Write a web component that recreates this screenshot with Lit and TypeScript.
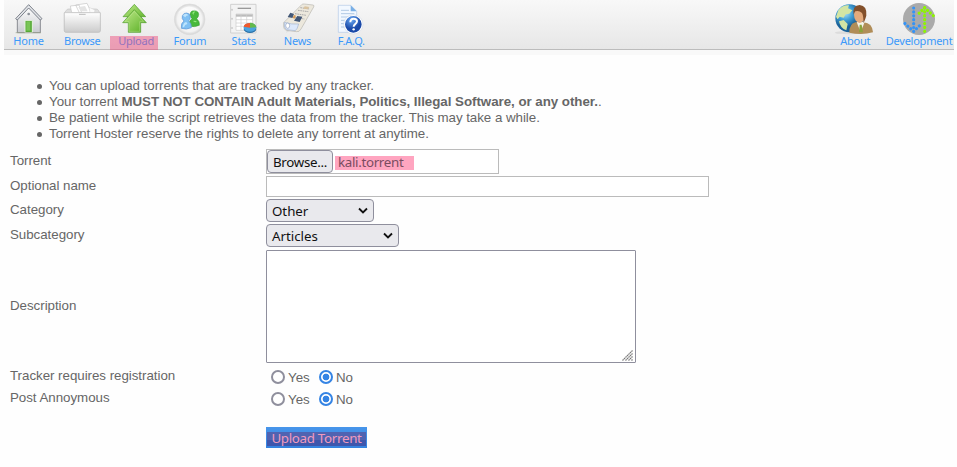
import { LitElement, html, css, svg } from "lit";
import { customElement } from "lit/decorators.js";

const icons: Record<string, unknown> = {
  home: svg`<svg viewBox="5 0 162 108">
    <defs><linearGradient id="r" x2="0" y2="1"><stop stop-color="#fff"/><stop offset="1" stop-color="#c9cbd0"/></linearGradient></defs>
    <path d="M51 56v42h69V56L85 20z" fill="url(#r)" stroke="#777b82" stroke-width="2.5"/>
    <path d="M46 56 85 14l40 42-5 4-35-36-34 36z" fill="#e2e4e8" stroke="#656b76" stroke-width="2.5" stroke-linejoin="round"/>
    <circle cx="85" cy="42" r="4" fill="#8d929a"/>
    <path d="M74 61h22v37H74z" fill="#55a936" stroke="#e9f4e3" stroke-width="3"/><path d="M78 64h12v28H78z" fill="#79c457"/>
    <path d="M46 98h76" stroke="#9aa58c" stroke-width="2"/></svg>`,
  browse: svg`<svg viewBox="166 0 162 108">
    <defs><linearGradient id="b" x2="0" y2="1"><stop stop-color="#fff"/><stop offset="1" stop-color="#cbcbcb"/></linearGradient></defs>
    <path d="M194 39 200 31q2-4 7-4h82q5 0 7 4l6 10v50q0 5-5 5H199q-5 0-5-5z" fill="#dedede" stroke="#c4c4c4" stroke-width="2"/>
    <path d="M212 18l26-3 8 23h-30zM228 15l34-5 13 28h-36z" fill="#fff" stroke="#c4c4c4" stroke-width="2"/>
    <path d="m236 21 20-3 8 16h-21z" fill="#e4e4e4"/><path d="m268 22 18 8-2 8h-13z" fill="#fafafa" stroke="#c5c5c5"/>
    <path d="M194 38h108v54q0 5-5 5H199q-5 0-5-5z" fill="url(#b)" stroke="#c0c0c0" stroke-width="2"/>
    <path d="M238 43h20" stroke="#bbb" stroke-width="3"/></svg>`,
  upload: svg`<svg viewBox="328 0 162 108">
    <defs><linearGradient id="u" x2="1" y2="1"><stop stop-color="#c1eb8c"/><stop offset="1" stop-color="#57ad22"/></linearGradient></defs>
    <path d="m404 13 34 37h-14v14h-40V50h-14z" fill="url(#u)" stroke="#4c9b28" stroke-width="2" stroke-linejoin="round"/>
    <path d="m404 29 36 39h-17v29h-37V68h-17z" fill="url(#u)" stroke="#4c9b28" stroke-width="2" stroke-linejoin="round"/>
    <path d="m404 34 28 31h-12v29h-32V65h-12z" fill="none" stroke="#d7f2b6" stroke-width="1.5" opacity=".6"/></svg>`,
  forum: svg`<svg viewBox="9 0 162 108">
    <defs><radialGradient id="f"><stop stop-color="#fff"/><stop offset=".8" stop-color="#f3f3f3"/><stop offset="1" stop-color="#d2d2d2"/></radialGradient></defs>
    <circle cx="89" cy="58" r="46" fill="url(#f)" stroke="#dedede" stroke-width="2"/>
    <path d="M87 78q-1-16 9-22-8-7-5-17 4-9 13-8 11 1 12 12 0 8-6 13 10 8 8 20-14 7-31 2z" fill="#48b83c" stroke="#30952e" stroke-width="1.5"/>
    <path d="M64 85q-2-16 8-22-8-7-5-16 4-9 13-8 11 1 11 12 0 7-5 12 9 7 8 20-15 7-30 2z" fill="#80c0f3" stroke="#5d95d5" stroke-width="2"/>
    <path d="M69 47q4-7 12-5l4 4q-7 0-9 6zM68 81q2-14 10-15 4 1 4 6-8 1-10 10z" fill="#ccecff" opacity=".8"/><path d="M97 39q3-5 9-4-6 3-6 10zM99 63q6-3 12 3l-6 1z" fill="#98ec85"/>
    <path d="M54 38q32-37 69 0-33-13-69 0z" fill="#fff" opacity=".55"/></svg>`,
  stats: svg`<svg viewBox="171 0 162 108">
    <path d="M212 13h76v86h-76z" fill="#f3f3f3" stroke="#d0d0d0" stroke-width="3"/>
    <g fill="#ccc"><circle cx="216" cy="29" r="3"/><circle cx="216" cy="56" r="3"/><circle cx="216" cy="84" r="3"/></g>
    <path d="M233 25h40" stroke="#999" stroke-width="4"/><path d="M228 42h50v49h-50z" fill="#fff" stroke="#ccc" stroke-width="2"/>
    <path d="M228 43h50v7h-50z" fill="#bbb"/><path d="M228 59h50M228 69h50M228 79h50M243 43v48M260 43v48" stroke="#cfcfcf" stroke-width="2"/>
    <ellipse cx="270" cy="87" rx="19" ry="12" fill="#286fa7"/><ellipse cx="270" cy="82" rx="19" ry="13" fill="#4ba3df"/>
    <path d="M270 83 251 80q2-11 19-11z" fill="#f05a2c"/><path d="m270 83V68q17 1 19 14z" fill="#65b94b"/></svg>`,
  news: svg`<svg viewBox="332 0 162 108">
    <path d="m377 98 52-23 31-57-12 2-66 67z" fill="#c7c7c7" opacity=".4"/>
    <path d="M370 68 424 14q3-3 8-2l26 3q5 1 2 6l-38 66q-5 10-14 8l-30-4q-8-3-8-11z" fill="#ece8dd" stroke="#b8b6b1" stroke-width="2"/>
    <path d="m420 23 28 4M413 31l31 4M404 41l34 5M395 51l37 6" stroke="#aaa" stroke-width="3" stroke-dasharray="5 2"/>
    <path d="m390 38 11 4-5 12-14-3zM411 48l15 2-8 16-17-4z" fill="#435877"/><path d="m401 45 6 2-4 9-6-2z" fill="#d69b56"/>
    <path d="m433 19 14 2-5 7-13-2z" fill="#d9c3a0"/>
    <path d="M372 67q20 7 43 5-4 16-10 20l-27-3q-8-5-6-22z" fill="#dce8fb" stroke="#a3b4cf" stroke-width="2"/><ellipse cx="382" cy="77" rx="6" ry="8" fill="#fff" stroke="#91a2bf" stroke-width="2"/></svg>`,
  faq: svg`<svg viewBox="493 0 162 108">
    <defs><radialGradient id="q" cx=".4" cy=".25"><stop stop-color="#68a8f3"/><stop offset="1" stop-color="#1b4aa8"/></radialGradient></defs>
    <path d="M536 16h37l18 18v63h-55z" fill="#f2f8ff" stroke="#b2c9e5" stroke-width="2"/><path d="M573 16v18h18z" fill="#79afe5"/>
    <path d="M544 31h24M544 41h40M544 51h35M544 61h20M544 71h20M544 81h20" stroke="#b2cae5" stroke-width="3"/>
    <circle cx="581" cy="73" r="27" fill="url(#q)" stroke="#fff" stroke-width="4"/><circle cx="581" cy="73" r="29" fill="none" stroke="#b9c5d9" stroke-width="1"/>
    <path d="M572 67q0-11 10-11 10 0 10 8 0 5-6 9-4 3-4 7" fill="none" stroke="#fff" stroke-width="6"/><circle cx="582" cy="88" r="3.6" fill="#fff"/></svg>`,
  about: svg`<svg viewBox="24 0 162 108">
    <defs><radialGradient id="g" cx=".35" cy=".3"><stop stop-color="#b4e6f8"/><stop offset=".5" stop-color="#45a3d9"/><stop offset="1" stop-color="#1a6299"/></radialGradient></defs>
    <ellipse cx="90" cy="98" rx="45" ry="5" fill="#ccc" opacity=".5"/>
    <circle cx="88" cy="55" r="42" fill="url(#g)"/>
    <path d="M55 31q13-17 32-15l-3 9 13 6-9 10-11 2-6 10-12-3-6 8-5-8zM57 64l14-4 12 12-4 19q-18-6-22-27z" fill="#d3e5a4"/>
    <path d="M88 98q0-27 18-31h25q26 2 28 30-34 9-71 1z" fill="#b08d58"/><path d="m110 66 12 31 12-31z" fill="#f4f3e8"/><path d="m119 74 6 0 4 23h-12z" fill="#89a33b"/>
    <ellipse cx="119" cy="44" rx="17" ry="25" fill="#e3aa7c"/><path d="M101 45q-5-28 18-30 23 2 20 32-6 19-9 22 1-21-4-30-9-9-20-5-4 3-5 11z" fill="#83502b"/></svg>`,
  development: svg`<svg viewBox="216 0 162 108">
    <circle cx="297" cy="57" r="48" fill="#aaa"/>
    <g fill="none" stroke-width="9.5" stroke-linecap="round" stroke-dasharray=".1 11.6">
    <path d="M281 24v70" stroke="#3593f5"/><path d="m281 94-28-25M281 94l25-24" stroke="#3593f5"/>
    <path d="M314 94V23" stroke="#8df500"/><path d="m314 23-24 24M314 23l27 25" stroke="#8df500"/></g></svg>`,
};

interface NavItem { id: string; label: string; marked?: boolean }
const leftNav: NavItem[] = [
  { id: "home", label: "Home" }, { id: "browse", label: "Browse" },
  { id: "upload", label: "Upload", marked: true }, { id: "forum", label: "Forum" },
  { id: "stats", label: "Stats" }, { id: "news", label: "News" }, { id: "faq", label: "F.A.Q." },
];
const rightNav: NavItem[] = [{ id: "about", label: "About" }, { id: "development", label: "Development" }];

@customElement("nav-bar")
export class NavBar extends LitElement {
  static styles = css`
    :host { display: flex; justify-content: space-between; box-sizing: border-box; height: 50px; margin: 0 3px 0 4px;
      border-bottom: 1px solid #bcbcbc; background: linear-gradient(#f8f8f8, #e7e7e7); box-shadow: 0 5px #f9f9f9; }
    .left, .right { display: flex; }
    .left { margin-left: -2.4px; }
    .right { gap: 10px; padding-right: 8px; }
    .item { width: 53.8px; display: flex; flex-direction: column; align-items: center; text-decoration: none;
      font: 11px/12px "Noto Sans", sans-serif; letter-spacing: -0.25px; color: #3b99fa; white-space: nowrap; }
    .item svg { display: block; flex: none; width: 54px; height: 36px; }
    .item span { margin-top: -1px; }
    .marked { position: relative; }
    .marked::after { content: ""; position: absolute; left: 1px; top: 36px; width: 48px; height: 14px;
      background: rgba(240, 70, 120, 0.46); }
  `;
  private item(n: NavItem) {
    return html`<a class="item ${n.marked ? "marked" : ""}">${icons[n.id]}<span>${n.label}</span></a>`;
  }
  render() {
    return html`<div class="left">${leftNav.map((n) => this.item(n))}</div>
      <div class="right">${rightNav.map((n) => this.item(n))}</div>`;
  }
}

@customElement("app-root")
export class AppRoot extends LitElement {
  static styles = css`
    :host { display: block; height: 467px; overflow: hidden; background: #fefefe; color: #666;
      font: 13.33px/16px "Liberation Sans", Arial, sans-serif; letter-spacing: -0.035px; }
    .rules { margin: 28px 0 7px; padding-left: 49px; list-style: none; }
    .rules li { display: flex; align-items: center; white-space: pre; height: 16px; }
    .rules li::before { content: ""; width: 5px; height: 5px; border-radius: 50%; background: #666; margin: 0 7px 0 -12px; }
    .form { display: grid; grid-template-columns: 256px 1fr; row-gap: 2px; padding-left: 10px;
      grid-template-rows: 25px 21px 23px 23px 115px 20px 20px; align-items: center; }
    .label { padding-bottom: 2px; }
    .low { padding-bottom: 0; }
    .box { box-sizing: border-box; border: 1px solid #bbb; background: #fff; }
    .ui { font-family: "Noto Sans", sans-serif; font-size: 13.33px; line-height: 18px; color: #111; }
    .file { width: 233px; height: 25px; display: flex; align-items: center; letter-spacing: -0.32px; }
    .pick { box-sizing: border-box; width: 66px; height: 23px; border: 1px solid #8f8f9d; border-radius: 4px; background: #e9e9ed;
      line-height: 22px; text-align: center; white-space: nowrap; }
    .name { margin: 3px 0 0 2px; width: 79px; height: 14px; line-height: 12px; box-sizing: border-box; padding-left: 3px;
      background: #ffa5c0; color: #7a4c60; }
    .optional { width: 443px; height: 21px; }
    .select { box-sizing: border-box; height: 23px; border: 1px solid #8f8f9d; border-radius: 4px; background: #e9e9ed;
      display: flex; align-items: center; justify-content: space-between; padding: 0 5px 0 5px; }
    .select svg { width: 10px; height: 7px; }
    .category { width: 108px; }
    .sub { width: 133px; }
    .area { width: 370px; height: 113px; border-color: #8f8f9d; border-radius: 1px; display: flex; align-items: flex-end; justify-content: flex-end; padding: 1px 2px; margin-bottom: 1px; }
    .area svg { width: 11px; height: 11px; }
    .radios { display: flex; align-items: center; padding: 2px 0 0 5px; }
    .radios .text { padding-top: 1px; }
    .radio { box-sizing: border-box; width: 14px; height: 14px; border: 2px solid #8f8f9d; border-radius: 50%; background: #fff; margin-right: 3px; }
    .on { border-color: #3584e4; background: radial-gradient(circle, #3584e4 3px, #fff 3.7px); }
    .yes { width: 31px; }
    .submit { box-sizing: border-box; display: block; margin: 19px 0 0 266px; width: 101px; height: 21px; padding: 5px 1px 2px;
      background: linear-gradient(#4795ea, #3482df); }
    .submit span { display: block; height: 14px; line-height: 12px; text-align: center; white-space: nowrap; letter-spacing: -0.3px;
      background: linear-gradient(#5063b1 60%, #3e56ac 60%); color: #f09abd; font-family: "Noto Sans", sans-serif; }
  `;
  private select(value: string, cls: string) {
    return html`<div class="select ui ${cls}"><span>${value}</span>
      <svg viewBox="0 0 10 7"><path d="m1 1.5 4 4 4-4" fill="none" stroke="#111" stroke-width="1.8"/></svg></div>`;
  }
  private radios() {
    return html`<div class="radios"><span class="radio"></span><span class="text yes">Yes</span><span class="radio on"></span><span class="text">No</span></div>`;
  }
  render() {
    return html`<nav-bar></nav-bar>
      <ul class="rules">
        <li>You can upload torrents that are tracked by any tracker.</li>
        <li>Your torrent <b>MUST NOT CONTAIN Adult Materials, Politics, Illegal Software, or any other.</b>.</li>
        <li>Be patient while the script retrieves the data from the tracker. This may take a while.</li>
        <li>Torrent Hoster reserve the rights to delete any torrent at anytime.</li>
      </ul>
      <div class="form">
        <div class="label">Torrent</div>
        <div class="box file ui"><span class="pick">Browse...</span><span class="name">kali.torrent</span></div>
        <div class="label">Optional name</div><div class="box optional"></div>
        <div class="label">Category</div>${this.select("Other", "category")}
        <div class="label">Subcategory</div>${this.select("Articles", "sub")}
        <div class="label">Description</div>
        <div class="box area"><svg viewBox="0 0 11 11"><path d="M.5 10.5l10-10M3.5 10.5l7-7M6.5 10.5l4-4M9.5 10.5l1-1" stroke="#777" stroke-width="1.2" stroke-dasharray="1.6 .5"/></svg></div>
        <div class="label low">Tracker requires registration</div>${this.radios()}
        <div class="label low">Post Annoymous</div>${this.radios()}
      </div>
      <div class="submit"><span>Upload Torrent</span></div>`;
  }
}
